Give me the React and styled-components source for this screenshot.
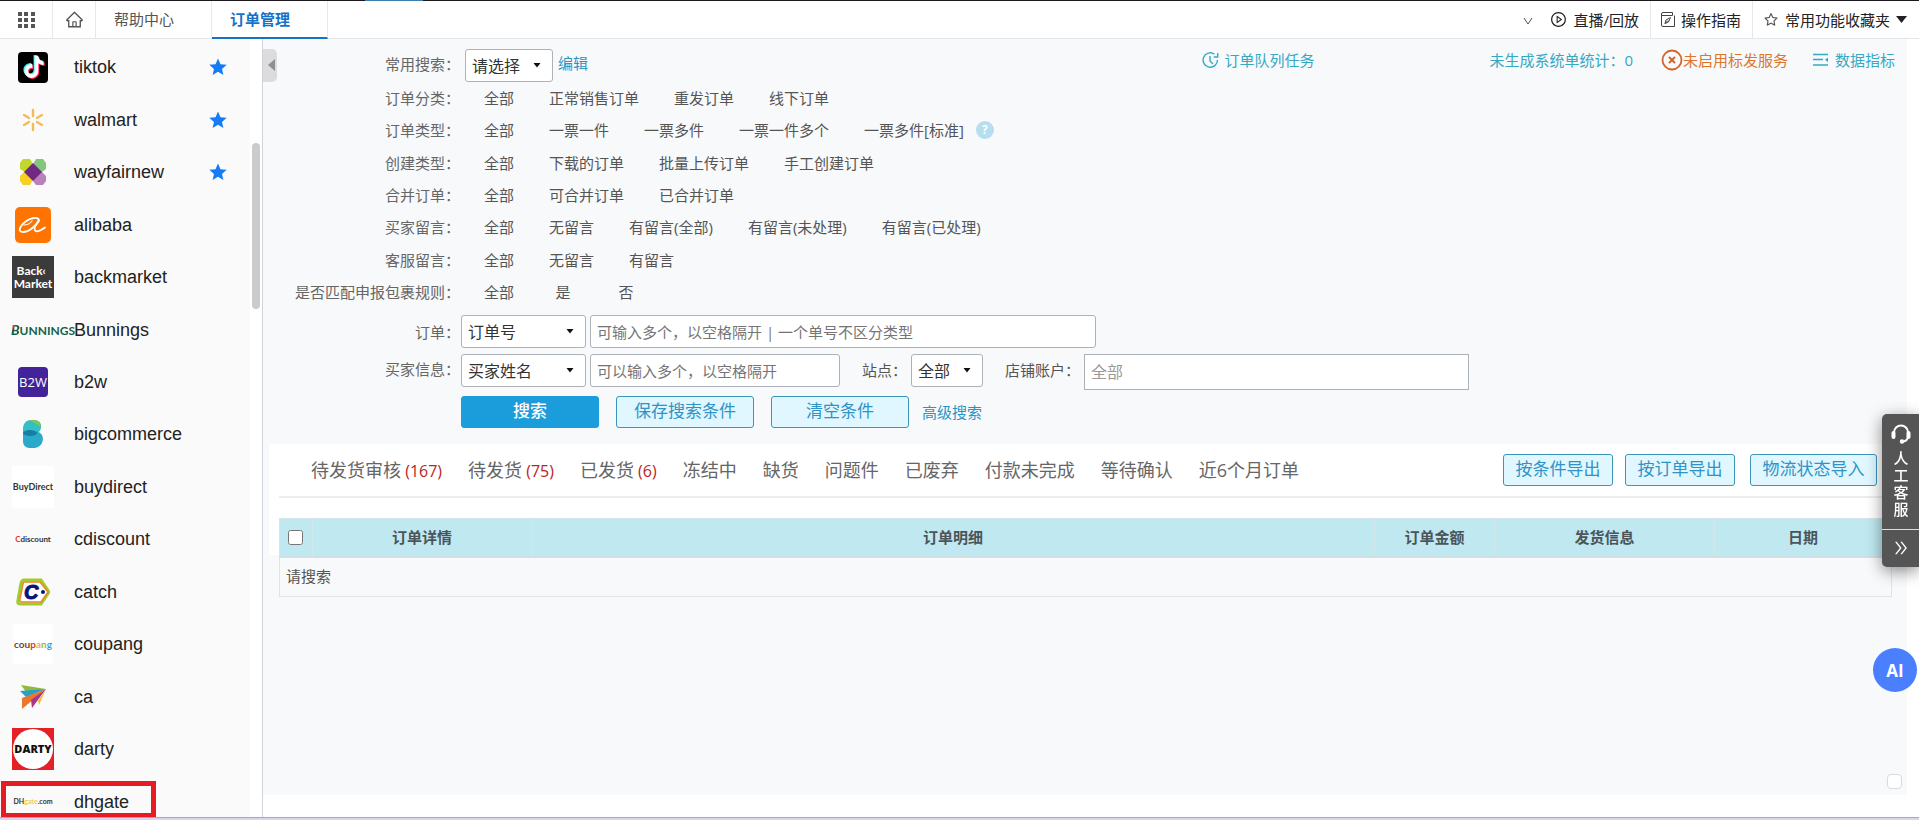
import React, { useState } from "react";
import styled, { createGlobalStyle } from "styled-components";
import {
  AiOutlineDoubleRight,
  AiOutlineHome,
  AiOutlinePlayCircle,
  AiOutlineStar,
} from "react-icons/ai";
import { FaTiktok } from "react-icons/fa";

const GlobalStyle = createGlobalStyle`
  * {
    box-sizing: border-box;
  }
  body {
    margin: 0;
    background: #fff;
    color: #555;
    font-family: "Open Sans", "Noto Sans CJK SC", sans-serif;
    font-size: 15px;
    line-height: 20px;
  }
  button, input, select {
    font-family: inherit;
  }
  a {
    text-decoration: none;
  }
`;

const Page = styled.div`
  display: flex;
  flex-direction: column;
  height: 100vh;
  overflow: hidden;
`;

const TopLine = styled.div`
  flex: none;
  height: 1px;
  padding-left: 19%;
  background: #1b1820;
  &::before {
    content: "";
    display: block;
    width: 58px;
    height: 1px;
    background: #3b7fae;
  }
`;

const BottomLine = styled.div`
  flex: none;
  height: 3px;
  border-top: 1px solid #a9a6bf;
  background: #dad5ec;
`;

/* Top navigation */
const Header = styled.header`
  flex: none;
  display: flex;
  height: 38px;
  border-bottom: 1px solid #e3e5e8;
`;

const IconTab = styled.button`
  display: flex;
  align-items: center;
  justify-content: center;
  width: ${(props) => props.$width}px;
  padding: 0;
  border: 0;
  border-right: 1px solid #e8e8e8;
  background: none;
  color: #555;
`;

const Tab = styled.a`
  width: ${(props) => props.$width}px;
  padding-left: 18px;
  border-right: 1px solid #e8e8e8;
  color: #555;
  line-height: 37px;
  ${(props) =>
    props.$active &&
    `
    margin-bottom: -1px;
    border-bottom: 2px solid #1672c8;
    color: #1672c8;
    font-weight: 700;
  `}
`;

const HeaderTools = styled.nav`
  display: flex;
  margin-left: auto;
`;

const Tool = styled.a`
  display: flex;
  align-items: center;
  gap: 6px;
  padding: 0 ${(props) => props.$right || 11}px 0 10px;
  border-right: ${(props) => (props.$right ? 0 : "1px solid #e8e8e8")};
  color: #222;
`;

const PlainTool = styled.button`
  padding: 0 6px;
  border: 0;
  background: none;
`;

/* Sidebar */
const Body = styled.div`
  flex: 1;
  display: flex;
  min-height: 0;
`;

const Sidebar = styled.aside`
  flex: none;
  display: flex;
  width: 263px;
  overflow: hidden;
  border-right: 1px solid #cfd3da;
`;

const PlatformList = styled.ul`
  flex: 1;
  display: grid;
  grid-auto-rows: 1fr;
  height: 789px;
  margin: 0;
  padding: 2px 0 0;
  background: #fafafa;
  list-style: none;
`;

const Platform = styled.li`
  position: relative;
  display: flex;
  align-items: center;
  padding: 0 23px 0 12px;
`;

const PlatformLink = styled.a`
  flex: 1;
  display: flex;
  align-items: center;
  gap: 20px;
  color: #222;
  font-family: "Liberation Sans", sans-serif;
  font-size: 18px;
`;

const Logo = styled.span`
  display: flex;
  align-items: center;
  justify-content: center;
  width: 42px;
  height: 42px;
  white-space: nowrap;
`;

const Highlight = styled.span`
  position: absolute;
  top: 5px;
  left: 1px;
  width: 155px;
  height: 37px;
  border: 5px solid #e51c23;
`;

const ScrollTrack = styled.div`
  width: 12px;
  padding: 104px 2px 0;
  background: #fff;
`;

const ScrollThumb = styled.div`
  height: 166px;
  border-radius: 4px;
  background: #cbcbcb;
`;

/* Logo parts */
const TileLogo = styled.span`
  display: flex;
  align-items: center;
  justify-content: center;
  width: ${(props) => props.$size}px;
  height: ${(props) => props.$size}px;
  border-radius: ${(props) => props.$radius || 0}px;
  background: ${(props) => props.$bg};
  color: ${(props) => props.$color || "#333"};
  font-family: ${(props) => props.$font || "Lato"}, sans-serif;
  font-size: ${(props) => props.$text}px;
  font-weight: ${(props) => props.$weight || 700};
  line-height: 13px;
`;

const Tint = styled.span`
  color: ${(props) => props.$c};
`;

const BunningsText = styled.span`
  margin-left: 20px;
  color: #12624a;
  font: 700 12px "Lato", sans-serif;
`;

const BigLetter = styled.span`
  background: linear-gradient(120deg, #d8392c 35%, #12624a 36%);
  background-clip: text;
  color: transparent;
  font-size: 14px;
  font-style: italic;
  font-weight: 900;
`;

/* Order search */
const Main = styled.main`
  flex: 1;
  min-width: 0;
  padding: 0 12px 22px 0;
`;

const Panel = styled.div`
  position: relative;
  height: 100%;
  padding-top: 10px;
  background: #f7f9fb;
`;

const Collapse = styled.button`
  position: absolute;
  top: 10px;
  left: 0;
  width: 14px;
  height: 33px;
  padding: 0 0 0 3px;
  border: 0;
  border-radius: 0 5px 5px 0;
  background: #dcdcdc;
`;

const Row = styled.div`
  display: flex;
  align-items: ${(props) => props.$align || "center"};
  margin-top: ${(props) => props.$top || 0}px;
`;

const RowLabel = styled.label`
  flex: none;
  width: 197px;
  margin-right: 1px;
  color: #666;
  text-align: right;
  line-height: 30px;
`;

const InlineLabel = styled.label`
  margin-left: 22px;
  line-height: 32px;
`;

const SelectWrap = styled.span`
  display: grid;
  align-items: center;
  width: ${(props) => props.$width}px;
  margin-left: ${(props) => props.$left || 0}px;
  > * {
    grid-area: 1 / 1;
  }
  svg {
    justify-self: end;
    margin-right: 12px;
    pointer-events: none;
  }
`;

const SelectBox = styled.select`
  width: 100%;
  height: 33px;
  padding: 0 6px;
  appearance: none;
  border: 1px solid #adb1b8;
  border-radius: 3px;
  background: #fff;
  color: #333;
  font-size: 16px;
`;

const TextBox = styled.input`
  width: ${(props) => props.$width}px;
  height: ${(props) => props.$height || 33}px;
  margin-left: 4px;
  padding: 0 6px;
  border: 1px solid #adb1b8;
  border-radius: ${(props) => (props.$height ? 0 : 3)}px;
  background: #fff;
  font-size: ${(props) => (props.$height ? 16 : 15)}px;
  &::placeholder {
    color: ${(props) => (props.$height ? "#999" : "#757575")};
  }
`;

const BlueLink = styled.a`
  margin-left: ${(props) => props.$left}px;
  color: #2a93c4;
  line-height: 28px;
`;

const Status = styled.div`
  display: flex;
  align-items: center;
  align-self: flex-start;
  margin: 0 12px 0 auto;
`;

const StatusItem = styled.a`
  display: flex;
  align-items: center;
  gap: ${(props) => props.$gap || 0}px;
  margin-left: ${(props) => props.$left || 0}px;
  color: ${(props) => (props.$warn ? "#dd762c" : "#35a9c4")};
  white-space: nowrap;
`;

const Filters = styled.div`
  display: grid;
  grid-auto-rows: 1fr;
  height: 226px;
`;

const Option = styled.a`
  min-width: 28px;
  margin-left: ${(props) => (props.$first ? 23 : 35)}px;
  color: #555;
  text-align: center;
`;

const Help = styled.button`
  width: 18px;
  height: 18px;
  margin-left: 12px;
  padding: 0;
  border: 0;
  border-radius: 50%;
  background: #b5def0;
  color: #fff;
  font-size: 12px;
  font-weight: 700;
  line-height: 18px;
`;

const Button = styled.button`
  width: ${(props) => props.$width || 138}px;
  height: 32px;
  margin-right: ${(props) => props.$right || 0}px;
  padding: 0 0 2px;
  border: 1px solid #3a97ba;
  border-radius: 3px;
  background: #e0f7ff;
  color: #2f93c6;
  font-size: 17px;
  line-height: 28px;
  ${(props) =>
    props.$primary &&
    `
    border-color: #1b9cdb;
    background: #1b9cdb;
    color: #fff;
    font-weight: 500;
  `}
`;

/* Order tabs and table */
const Results = styled.section`
  margin: 16px 0 0 6px;
  padding: 0 15px 0 10px;
  background: linear-gradient(#fff, #fff) no-repeat 0 0 / 100% 111px;
`;

const OrderTabs = styled.nav`
  display: flex;
  align-items: center;
  gap: 26px;
  height: 54px;
  padding-left: 32px;
  border-bottom: 2px solid #ededed;
`;

const OrderTab = styled.a`
  color: #666;
  font-size: 18px;
  line-height: 24px;
  white-space: nowrap;
`;

const Count = styled.span`
  color: #bd2323;
  font-size: 16px;
`;

const Exports = styled.div`
  display: flex;
  margin: 0 15px 0 auto;
`;

const Table = styled.table`
  width: 100%;
  margin-top: 20px;
  border-collapse: collapse;
  table-layout: fixed;
`;

const Th = styled.th`
  width: ${(props) => (props.$width ? `${props.$width}px` : "auto")};
  height: 38px;
  padding: 0;
  border: 1px solid #d5e6ea;
  border-bottom: 2px solid #cfdfe3;
  background: #c0e8f1;
  color: #4b5559;
  text-align: center;
`;

const Td = styled.td`
  height: 40px;
  padding: 0 6px 2px;
  border: 1px solid #e1e3e6;
`;

const CheckBox = styled.input`
  display: block;
  width: 15px;
  height: 15px;
  margin: 0 0 0 8px;
`;

/* Floating helpers */
const Service = styled.aside`
  position: fixed;
  top: 414px;
  right: 0;
  width: 37px;
  height: 153px;
  border-radius: 5px 0 0 5px;
  background: #555;
  box-shadow: 0 4px 16px rgba(0, 0, 0, 0.45);
  color: #fff;
`;

const ServiceButton = styled.button`
  display: flex;
  flex-direction: column;
  align-items: center;
  width: 100%;
  height: ${(props) => props.$height}px;
  padding: 9px 0 0 1px;
  border: 0;
  border-bottom: ${(props) => (props.$line ? "1px solid #ddd" : 0)};
  background: none;
  color: #fff;
  font-size: 15px;
  font-weight: 500;
  line-height: 17px;
`;

const ServiceText = styled.span`
  width: 15px;
  margin-top: 6px;
  word-break: break-all;
`;

const AiButton = styled.button`
  position: fixed;
  right: 2px;
  bottom: 128px;
  width: 44px;
  height: 44px;
  padding: 0;
  border: 0;
  border-radius: 50%;
  background: #4a80ff;
  color: #fff;
  font-size: 17px;
  font-weight: 700;
`;

const CornerBox = styled.button`
  position: absolute;
  right: 5px;
  bottom: 6px;
  width: 15px;
  height: 15px;
  padding: 0;
  border: 1px solid #d8dadd;
  border-radius: 4px;
  background: #fff;
`;

const GridIcon = () => (
  <svg width="17" height="16" fill="#555">
    {[0, 6, 12].map((y) => [0, 6, 13].map((x) => <rect key={x + "-" + y} x={x} y={y} width="4" height="4" />))}
  </svg>
);

const GuideIcon = () => (
  <svg width="14" height="15" fill="none" stroke="#444">
    <path d="M.5 3.500h11v-3h-9.500q-1.500 0-1.500 1.500v11q0 1.500 1.500 1.500h11.500v-11" />
    <path d="M4 11.500l1-3.500 4.500-2.500-2 4.500zM4 11.500l3-3" />
  </svg>
);

const ClockIcon = () => (
  <svg width="17" height="17" fill="none" stroke="#35a9c4" strokeWidth="1.4">
    <path d="M12.500 2.200A7.200 7.200 0 1 0 15.500 8" />
    <path d="M15.700 1v4h-4M8 4v5l3 3" />
  </svg>
);

const WarnIcon = () => (
  <svg width="22" height="22" fill="none" stroke="#d4652a">
    <circle cx="11" cy="11" r="9.500" strokeWidth="1.800" />
    <path d="M8 8l6 6M14 8l-6 6" strokeWidth="2" />
  </svg>
);

const MetricIcon = () => (
  <svg width="17" height="14" fill="none" stroke="#35a9c4" strokeWidth="1.400">
    <path d="M1 1.500h15M1 6.500h10M1 12h15" />
    <path d="M16 4.500v4.500l-3-2.300z" fill="#35a9c4" stroke="none" />
  </svg>
);

const HeadsetIcon = () => (
  <svg width="20" height="21" fill="none" stroke="#fff" strokeWidth="2">
    <path d="M3 12V9.500a7 7 0 0 1 14 0V13q0 4-4 5.500" />
    <path d="M2.500 10v4M17.500 10v4" strokeWidth="4" strokeLinecap="round" />
    <circle cx="11" cy="18.500" r="1.200" />
  </svg>
);

const StarIcon = () => (
  <svg width="18" height="18" fill="#147cf6">
    <path d="M9 0.500l2.500 5.700 6.200.6-4.700 4.100 1.400 6.100L9 13.800 3.600 17 5 10.900.3 6.800l6.200-.6z" />
  </svg>
);

const Caret = () => (
  <svg width="8" height="5">
    <path d="M.5 0h7L4 4.500z" fill="#111" />
  </svg>
);

const TiktokLogo = () => (
  <svg width="30" height="31">
    <rect width="30" height="31" rx="4" fill="#000" />
    <FaTiktok x="4" y="3" size="22" color="#25f4ee" />
    <FaTiktok x="6" y="5" size="22" color="#fe2c55" />
    <FaTiktok x="5" y="4" size="22" color="#fff" />
  </svg>
);

const WalmartLogo = () => (
  <svg width="24" height="24" stroke="#f3bd55" strokeWidth="2.400" strokeLinecap="round">
    <path d="M12 2v6M12 16v6M3 7l5 3M16 14l5 3M3 17l5-3M16 10l5-3" />
  </svg>
);

const WayfairLogo = () => (
  <svg width="28" height="28">
    <path d="M4 1h7l3 5v8H6L1 11V5z" fill="#c1d72e" />
    <path d="M17 1h7l3 4v6l-4 3h-9V6z" fill="#83c77a" />
    <path d="M1 18l4-4h9v8l-3 5H4l-3-4z" fill="#f6d11f" />
    <path d="M14 14h9l4 4v5l-3 4h-7l-3-4z" fill="#b982bc" />
    <path d="M14 5l9 9-9 9-9-9z" fill="#722780" />
  </svg>
);

const AlibabaLogo = () => (
  <svg width="36" height="36" fill="none" stroke="#fff" strokeLinecap="round">
    <rect width="36" height="36" rx="5" fill="#ff7300" stroke="none" />
    <path d="M9 18q5 0 8-4" strokeWidth="1.200" />
    <path d="M24 13c-1-4-9-2-14 2s-8 10-2 10 13-6 16-12" strokeWidth="1.800" />
    <path d="M24 14q-6 7-4 9.500t10-3" strokeWidth="1.800" />
  </svg>
);

const BigcommerceLogo = () => (
  <svg width="22" height="30">
    <path d="M1 14V9Q2 1 9 1h4q7 1 6 8-1 5-7 7z" fill="#35bfc4" />
    <path d="M7 1h6q6 1 6 7-6-4-12-7" fill="#7cc65a" />
    <path d="M1 12q7 3 13 0 7 2 7 8-1 8-8 9H7q-6-1-6-7z" fill="#2ba9c9" />
    <ellipse cx="8" cy="14" rx="7" ry="3" fill="#147fa3" />
  </svg>
);

const CatchLogo = () => (
  <svg width="34" height="28">
    <path d="M8 2h17l8 12-8 12H4q-3 0-2-4L5 5q1-3 3-3z" fill="#fff" stroke="#a2cc2b" strokeWidth="3" />
    <path d="M9 4h15l8 10-7 10H6q-3 0-2-3L7 6q0-2 2-2z" fill="#fff" stroke="#e8842b" strokeWidth="1.500" />
    <text x="8" y="21" fill="#0a1478" stroke="#0a1478" fontFamily="Liberation Sans" fontWeight="700" fontStyle="italic" fontSize="20">C</text>
    <circle cx="27" cy="14" r="2" fill="#0a1478" />
  </svg>
);

const CaLogo = () => (
  <svg width="28" height="26">
    <path d="M2 1l25 4-20 3z" fill="#92b93a" />
    <path d="M1 7l26-2-20 8z" fill="#279fc7" />
    <path d="M27 5L3 14v11z" fill="#ea7630" />
    <path d="M27 5L12 16l1 8z" fill="#a8378b" />
    <path d="M27 5l-8 12 1 4z" fill="#f3bd2d" />
  </svg>
);

const DartyLogo = () => (
  <svg width="42" height="42">
    <rect width="42" height="42" fill="#e41f26" />
    <circle cx="21" cy="21" r="20" fill="#fff" />
    <text x="21" y="25" textAnchor="middle" fill="#111" fontFamily="Open Sans" fontWeight="800" fontSize="11">DARTY</text>
  </svg>
);

const platforms = [
  { name: "tiktok", star: true, logo: <TiktokLogo /> },
  { name: "walmart", star: true, logo: <WalmartLogo /> },
  { name: "wayfairnew", star: true, logo: <WayfairLogo /> },
  { name: "alibaba", logo: <AlibabaLogo /> },
  {
    name: "backmarket",
    logo: (
      <TileLogo $size={42} $bg="#3b3b3b" $color="#fff" $text={12}>
        <span>
          &nbsp;Back‹
          <br />
          Market
        </span>
      </TileLogo>
    ),
  },
  {
    name: "Bunnings",
    logo: (
      <BunningsText>
        <BigLetter>B</BigLetter>
        UNNINGS
      </BunningsText>
    ),
  },
  {
    name: "b2w",
    logo: (
      <TileLogo $size={30} $radius={4} $bg="#43239a" $color="#fff" $text={13} $weight={400} $font="Open Sans">
        B2W
      </TileLogo>
    ),
  },
  { name: "bigcommerce", logo: <BigcommerceLogo /> },
  {
    name: "buydirect",
    logo: (
      <TileLogo $size={42} $bg="#fff" $text={9}>
        BuyDirect
      </TileLogo>
    ),
  },
  {
    name: "cdiscount",
    logo: (
      <TileLogo $size={42} $bg="none" $text={8}>
        <Tint $c="#e0322c">C</Tint>discount
      </TileLogo>
    ),
  },
  { name: "catch", logo: <CatchLogo /> },
  {
    name: "coupang",
    logo: (
      <TileLogo $size={40} $bg="#fff" $text={10} $font="Lato">
        <Tint $c="#75452f">cou</Tint>
        <Tint $c="#d93a2b">p</Tint>
        <Tint $c="#f3b52c">a</Tint>
        <Tint $c="#8fbf45">n</Tint>
        <Tint $c="#3aa5dc">g</Tint>
      </TileLogo>
    ),
  },
  { name: "ca", logo: <CaLogo /> },
  { name: "darty", logo: <DartyLogo /> },
  {
    name: "dhgate",
    marked: true,
    logo: (
      <TileLogo $size={42} $bg="none" $text={7}>
        DH<Tint $c="#efcf4b">gate</Tint>.com
      </TileLogo>
    ),
  },
];

const filters = [
  { label: "订单分类：", options: ["全部", "正常销售订单", "重发订单", "线下订单"] },
  { label: "订单类型：", options: ["全部", "一票一件", "一票多件", "一票一件多个", "一票多件[标准]"], help: true },
  { label: "创建类型：", options: ["全部", "下载的订单", "批量上传订单", "手工创建订单"] },
  { label: "合并订单：", options: ["全部", "可合并订单", "已合并订单"] },
  { label: "买家留言：", options: ["全部", "无留言", "有留言(全部)", "有留言(未处理)", "有留言(已处理)"] },
  { label: "客服留言：", options: ["全部", "无留言", "有留言"] },
  { label: "是否匹配申报包裹规则：", options: ["全部", "是", "否"] },
];

const orderTabs = [
  { name: "待发货审核", count: 167 },
  { name: "待发货", count: 75 },
  { name: "已发货", count: 6 },
  { name: "冻结中" },
  { name: "缺货" },
  { name: "问题件" },
  { name: "已废弃" },
  { name: "付款未完成" },
  { name: "等待确认" },
  { name: "近6个月订单" },
];

const Dropdown = ({ id, width, left, children }) => (
  <SelectWrap $width={width} $left={left}>
    <SelectBox id={id}>
      <option>{children}</option>
    </SelectBox>
    <Caret />
  </SelectWrap>
);

const App = () => {
  const [checked, setChecked] = useState(false);

  return (
    <Page>
      <GlobalStyle />
      <TopLine />
      <Header>
        <IconTab $width={53} aria-label="应用">
          <GridIcon />
        </IconTab>
        <IconTab $width={43} aria-label="首页">
          <AiOutlineHome size={19} />
        </IconTab>
        <Tab $width={116} href="#help">
          帮助中心
        </Tab>
        <Tab $width={116} $active href="#orders">
          订单管理
        </Tab>
        <HeaderTools>
          <PlainTool aria-label="展开">
            <svg width="12" height="8" fill="none" stroke="#555">
              <path d="M2 1l4 6 4-6" />
            </svg>
          </PlainTool>
          <Tool href="#live">
            <AiOutlinePlayCircle size={17} />
            直播/回放
          </Tool>
          <Tool href="#guide">
            <GuideIcon />
            操作指南
          </Tool>
          <Tool $right={12} href="#favorites">
            <AiOutlineStar size={16} color="#555" />
            常用功能收藏夹
            <svg width="11" height="8">
              <path d="M0 0h11L5.500 7z" fill="#222" />
            </svg>
          </Tool>
        </HeaderTools>
      </Header>

      <Body>
        <Sidebar>
          <PlatformList>
            {platforms.map((item) => (
              <Platform key={item.name}>
                <PlatformLink href={`#${item.name}`}>
                  <Logo>{item.logo}</Logo>
                  {item.name}
                </PlatformLink>
                {item.star && <StarIcon />}
                {item.marked && <Highlight />}
              </Platform>
            ))}
          </PlatformList>
          <ScrollTrack>
            <ScrollThumb />
          </ScrollTrack>
        </Sidebar>

        <Main>
          <Panel>
            <Collapse aria-label="收起">
              <svg width="7" height="12">
                <path d="M7 0v12L0 6z" fill="#8f8f8f" />
              </svg>
            </Collapse>
            <Row $align="flex-start">
              <RowLabel htmlFor="saved">常用搜索：</RowLabel>
              <Dropdown id="saved" width={88} left={4}>
                请选择
              </Dropdown>
              <BlueLink $left={5} href="#edit">
                编辑
              </BlueLink>
              <Status>
                <StatusItem $gap={5} href="#queue">
                  <ClockIcon />
                  订单队列任务
                </StatusItem>
                <StatusItem $left={175} href="#unmade">
                  未生成系统单统计：0
                </StatusItem>
                <StatusItem $left={28} $warn href="#service">
                  <WarnIcon />
                  未启用标发服务
                </StatusItem>
                <StatusItem $left={24} $gap={6} href="#metrics">
                  <MetricIcon />
                  数据指标
                </StatusItem>
              </Status>
            </Row>

            {/* Quick filters */}
            <Filters>
              {filters.map((filter) => (
                <Row key={filter.label}>
                  <RowLabel as="span">{filter.label}</RowLabel>
                  {filter.options.map((option, i) => (
                    <Option key={option} $first={i === 0} href="#filter">
                      {option}
                    </Option>
                  ))}
                  {filter.help && <Help aria-label="说明">?</Help>}
                </Row>
              ))}
            </Filters>

            <Row $top={7}>
              <RowLabel htmlFor="order-kind">订单：</RowLabel>
              <Dropdown id="order-kind" width={125}>
                订单号
              </Dropdown>
              <TextBox $width={506} aria-label="订单号" placeholder="可输入多个，以空格隔开 | 一个单号不区分类型" />
            </Row>
            <Row $top={6} $align="flex-start">
              <RowLabel htmlFor="buyer-kind">买家信息：</RowLabel>
              <Dropdown id="buyer-kind" width={125}>
                买家姓名
              </Dropdown>
              <TextBox $width={250} aria-label="买家信息" placeholder="可以输入多个，以空格隔开" />
              <InlineLabel htmlFor="site">站点：</InlineLabel>
              <Dropdown id="site" width={72} left={4}>
                全部
              </Dropdown>
              <InlineLabel htmlFor="shop">店铺账户：</InlineLabel>
              <TextBox id="shop" $width={385} $height={36} placeholder="全部" />
            </Row>
            <Row $top={6}>
              <RowLabel as="span" />
              <Button $primary $right={17}>
                搜索
              </Button>
              <Button $right={17}>保存搜索条件</Button>
              <Button>清空条件</Button>
              <BlueLink $left={13} href="#advanced">
                高级搜索
              </BlueLink>
            </Row>

            {/* Orders */}
            <Results>
              <OrderTabs>
                {orderTabs.map((tab) => (
                  <OrderTab key={tab.name} href="#tab">
                    {tab.name}
                    {tab.count && <Count> ({tab.count})</Count>}
                  </OrderTab>
                ))}
                <Exports>
                  <Button $width={110} $right={12}>
                    按条件导出
                  </Button>
                  <Button $width={110} $right={15}>
                    按订单导出
                  </Button>
                  <Button $width={127}>物流状态导入</Button>
                </Exports>
              </OrderTabs>
              <Table>
                <thead>
                  <tr>
                    <Th $width={33}>
                      <CheckBox
                        type="checkbox"
                        aria-label="全选"
                        checked={checked}
                        onChange={() => setChecked(!checked)}
                      />
                    </Th>
                    <Th $width={219}>订单详情</Th>
                    <Th>订单明细</Th>
                    <Th $width={120}>订单金额</Th>
                    <Th $width={220}>发货信息</Th>
                    <Th $width={177}>日期</Th>
                  </tr>
                </thead>
                <tbody>
                  <tr>
                    <Td colSpan={6}>请搜索</Td>
                  </tr>
                </tbody>
              </Table>
            </Results>
            <CornerBox aria-label="固定" />
          </Panel>
        </Main>
      </Body>
      <BottomLine />

      <Service>
        <ServiceButton $height={116} $line>
          <HeadsetIcon />
          <ServiceText>人工客服</ServiceText>
        </ServiceButton>
        <ServiceButton $height={37} aria-label="收起客服">
          <AiOutlineDoubleRight size={18} />
        </ServiceButton>
      </Service>
      <AiButton>AI</AiButton>
    </Page>
  );
};

export default App;
